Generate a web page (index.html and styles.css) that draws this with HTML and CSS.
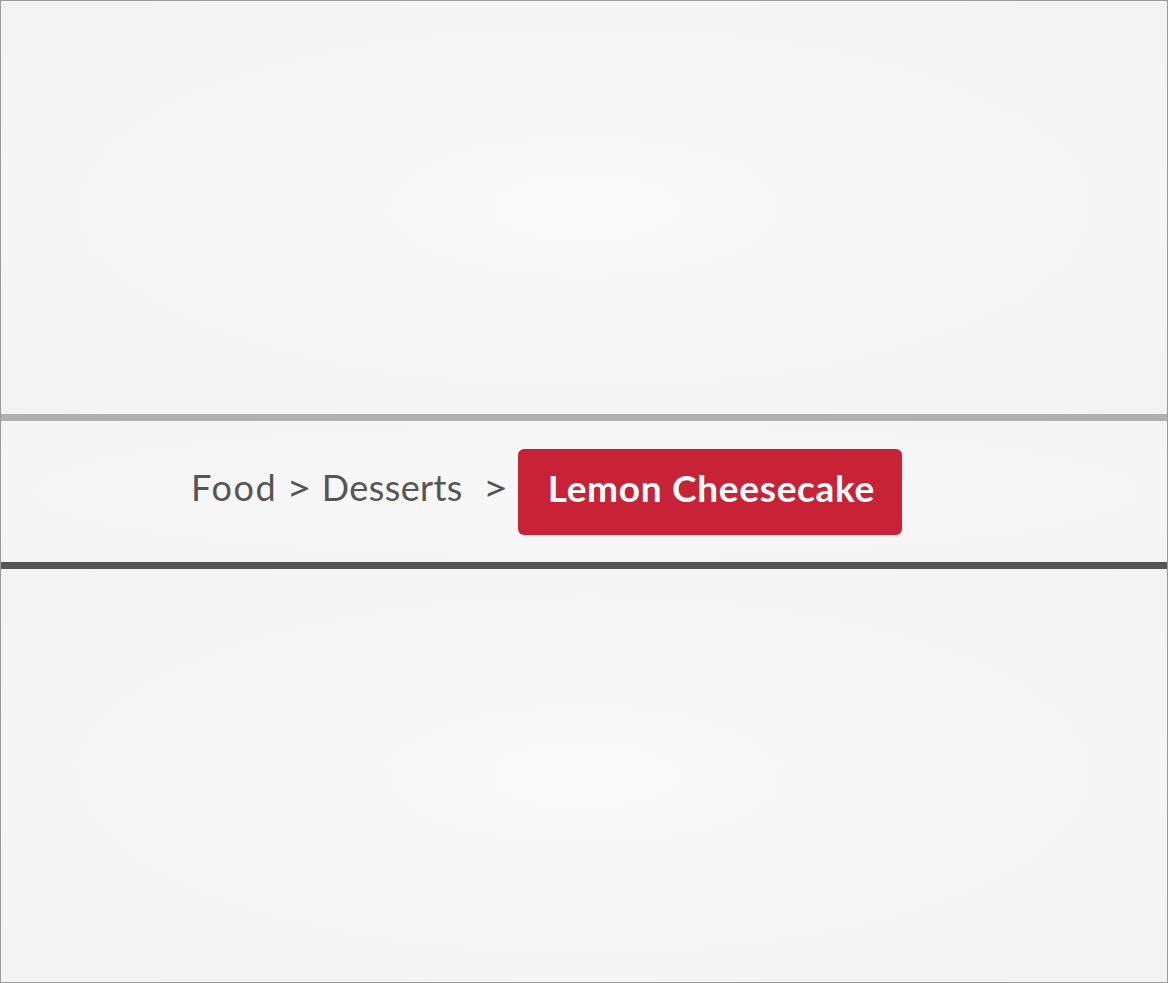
FILE: index.html
```html
<!DOCTYPE html>
<html lang="en">
<head>
<meta charset="utf-8">
<title>Breadcrumb</title>
<link rel="stylesheet" href="styles.css">
</head>
<body>
<div class="frame">
  <div class="area area-top"></div>
  <div class="bar bar-light"></div>
  <nav class="band">
    <span class="crumb">Food</span>
    <span class="sep">&gt;</span>
    <span class="crumb">Desserts</span>
    <span class="sep sep-wide">&gt;</span>
    <span class="current">Lemon Cheesecake</span>
  </nav>
  <div class="bar bar-dark"></div>
  <div class="area area-bottom"></div>
</div>
</body>
</html>
```

FILE: styles.css
```css
html, body {
  margin: 0;
  padding: 0;
  background: #f4f4f4;
}

.frame {
  box-sizing: border-box;
  width: 1168px;
  height: 983px;
  border: 1px solid #9a9a9a;
  display: flex;
  flex-direction: column;
  background: #f4f4f4;
  font-family: Lato, "Open Sans", sans-serif;
}

.area {
  background: radial-gradient(ellipse at center, #f9f9f9 0%, #f6f6f6 50%, #f3f3f3 100%);
}

.area-top {
  height: 413px;
}

.area-bottom {
  flex: 1;
}

.bar {
  height: 7px;
}

.bar-light {
  background: #b0b0b0;
}

.bar-dark {
  background: #555555;
}

.band {
  height: 141px;
  box-sizing: border-box;
  padding-left: 190px;
  display: flex;
  align-items: center;
  background: radial-gradient(ellipse at center, #f8f8f8 0%, #f4f4f4 100%);
  color: #555555;
  font-size: 36px;
}

.crumb {
  margin-bottom: 10px;
  letter-spacing: 0.4px;
}

.crumb:first-child {
  letter-spacing: 1.6px;
}

.sep {
  margin: 0 10px 10px 9px;
  font-size: 44px;
  line-height: 1;
  transform: scaleY(0.85);
}

.sep-wide {
  margin: 0 10px 10px 20px;
}

.current {
  box-sizing: border-box;
  height: 86px;
  width: 384px;
  padding: 0 28px 8px 30px;
  display: flex;
  align-items: center;
  justify-content: center;
  background: #c82237;
  border-radius: 6px;
  color: #ffffff;
  font-weight: 700;
  font-size: 37px;
  letter-spacing: 0.7px;
  white-space: nowrap;
}
```
